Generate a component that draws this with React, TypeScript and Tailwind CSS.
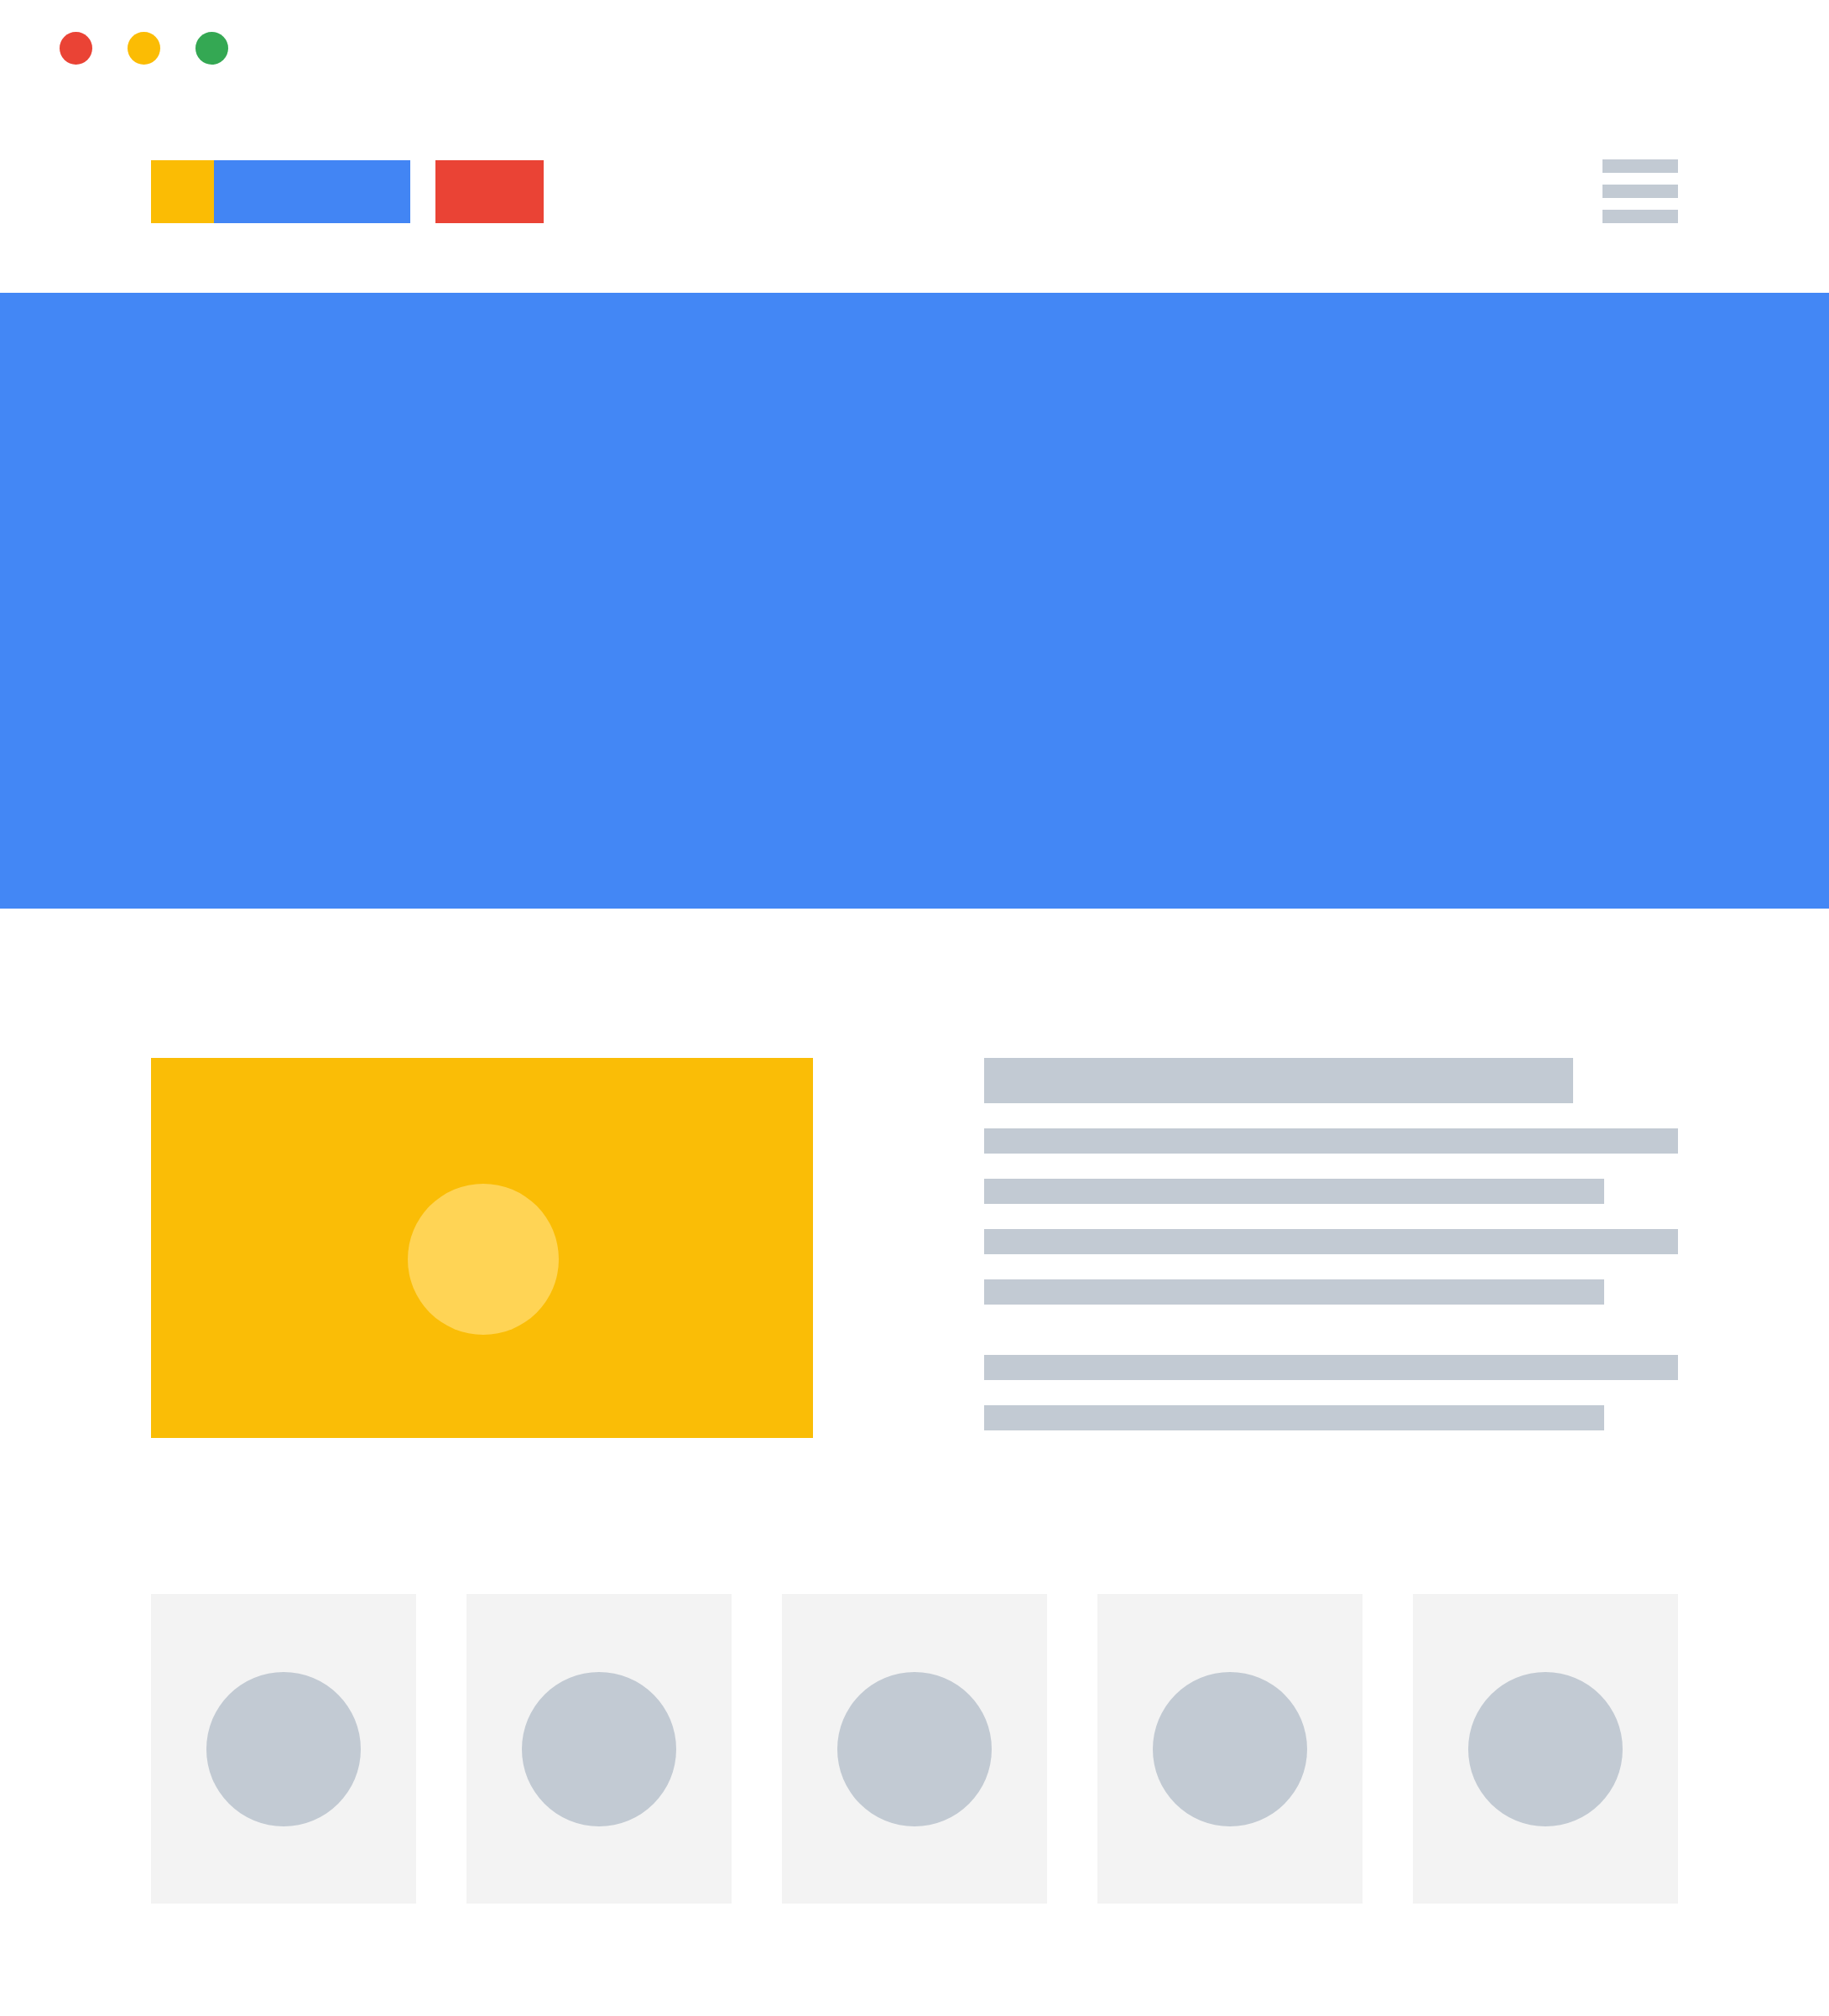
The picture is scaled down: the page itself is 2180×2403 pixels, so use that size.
export default function App() {
  const lines = [
    { w: 'w-full', mt: 'mt-[30px]' },
    { w: 'w-[739px]', mt: 'mt-[30px]' },
    { w: 'w-full', mt: 'mt-[30px]' },
    { w: 'w-[739px]', mt: 'mt-[30px]' },
    { w: 'w-full', mt: 'mt-[60px]' },
    { w: 'w-[739px]', mt: 'mt-[30px]' },
  ];

  return (
    <div className="w-[2180px] h-[2403px] bg-white">
      {/* window dots */}
      <div className="flex gap-[42px] pl-[71px] pt-[38px]">
        <span className="block w-[39px] h-[39px] rounded-full bg-[#EA4335]" />
        <span className="block w-[39px] h-[39px] rounded-full bg-[#FBBC04]" />
        <span className="block w-[39px] h-[39px] rounded-full bg-[#34A853]" />
      </div>

      {/* header */}
      <div className="flex items-center justify-between px-[180px] pt-[113px] pb-[83px]">
        <div className="flex items-center h-[75px]">
          <div className="w-[75px] h-[75px] bg-[#FBBC04]" />
          <div className="w-[234px] h-[75px] bg-[#4285F4]" />
          <div className="w-[129px] h-[75px] bg-[#EA4335] ml-[30px]" />
        </div>
        <div className="flex flex-col gap-[14px] w-[90px]">
          <div className="h-[16px] bg-[#C2CAD3]" />
          <div className="h-[16px] bg-[#C2CAD3]" />
          <div className="h-[16px] bg-[#C2CAD3]" />
        </div>
      </div>

      {/* hero */}
      <div className="h-[734px] bg-[#4387F5]" />

      {/* feature */}
      <div className="flex px-[180px] pt-[178px] gap-[204px]">
        <div className="w-[789px] h-[453px] shrink-0 bg-[#FABD06] flex items-center justify-center pt-[27px] pl-[3px]">
          <div className="w-[180px] h-[180px] rounded-full bg-[#FFD455]" />
        </div>
        <div className="flex-1 flex flex-col">
          <div className="w-[702px] h-[54px] bg-[#C2CAD3]" />
          {lines.map((l, i) => (
            <div key={i} className={`${l.w} ${l.mt} h-[30px] bg-[#C2CAD3]`} />
          ))}
        </div>
      </div>

      {/* cards */}
      <div className="grid grid-cols-5 gap-[60px] px-[180px] pt-[186px]">
        {[0, 1, 2, 3, 4].map((i) => (
          <div key={i} className="h-[369px] bg-[#F3F3F3] flex items-center justify-center">
            <div className="w-[184px] h-[184px] rounded-full bg-[#C2CAD3]" />
          </div>
        ))}
      </div>
    </div>
  );
}
